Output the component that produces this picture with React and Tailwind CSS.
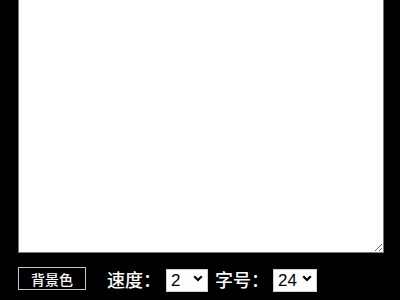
import { useState } from 'react'

const CJK = { fontFamily: '"Noto Sans CJK SC", "Noto Sans", sans-serif' }

function Chevron() {
  return (
    <svg className="pointer-events-none absolute right-[5px] top-[8px]" width="10" height="7" viewBox="0 0 10 7">
      <path d="M1.2 1.2 L5 5 L8.8 1.2" fill="none" stroke="#000" strokeWidth="2.2" />
    </svg>
  )
}

function Pick({ value, onChange, options, w }) {
  return (
    <div className={`relative h-[23px] ${w}`}>
      <select
        value={value}
        onChange={e => onChange(e.target.value)}
        className="h-full w-full appearance-none rounded-none border border-[#d0d0d0] bg-white pl-[4px] text-[17px] leading-none text-black outline-none"
        style={{ fontFamily: '"Liberation Sans", Arial, sans-serif' }}
      >
        {options.map(o => <option key={o} value={o}>{o}</option>)}
      </select>
      <Chevron />
    </div>
  )
}

export default function App() {
  const [speed, setSpeed] = useState('2')
  const [size, setSize] = useState('24')

  return (
    <div className="h-[300px] w-[400px] overflow-hidden bg-black pl-[18px]" style={CJK}>
      <textarea className="block h-[253px] w-[366px] border border-t-0 border-[#767676] bg-white outline-none" />

      {/* controls */}
      <div className="mt-[14px] flex h-[23px] items-center">
        <button className="h-[23px] w-[68px] border border-[#c8c8c8] bg-black text-[14px] font-medium leading-none text-white">
          背景色
        </button>
        <span className="ml-[21px] text-[18px] font-medium leading-none text-white">速度：</span>
        <div className="ml-[5px]">
          <Pick value={speed} onChange={setSpeed} options={['1', '2', '3', '4', '5']} w="w-[42px]" />
        </div>
        <span className="ml-[7px] text-[18px] font-medium leading-none text-white">字号：</span>
        <div className="ml-[4px]">
          <Pick value={size} onChange={setSize} options={['16', '20', '24', '28', '32']} w="w-[44px]" />
        </div>
      </div>
    </div>
  )
}
